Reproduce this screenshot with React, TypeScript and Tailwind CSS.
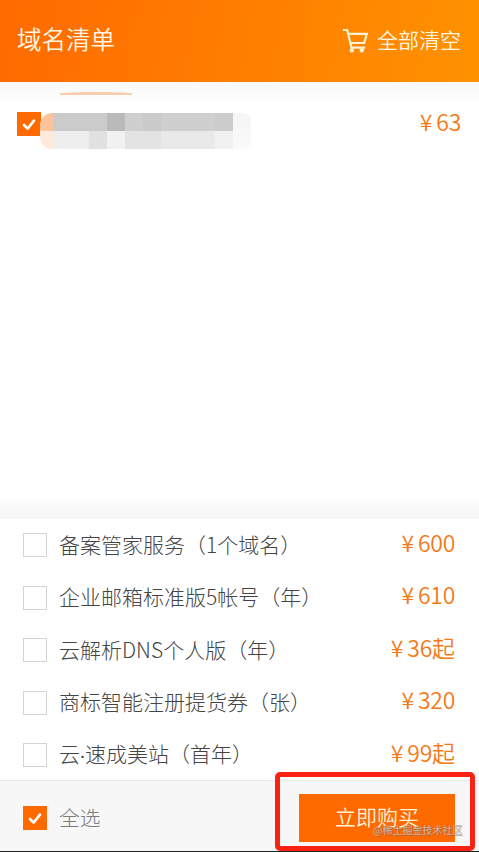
import clsx from "clsx";

const services = [
  { name: "备案管家服务（1个域名）", price: "600" },
  { name: "企业邮箱标准版5帐号（年）", price: "610" },
  { name: "云解析DNS个人版（年）", price: "36", from: true },
  { name: "商标智能注册提货券（张）", price: "320" },
  { name: "云·速成美站（首年）", price: "99", from: true },
];

function Checkbox({ checked = false }: { checked?: boolean }) {
  return (
    <span
      className={clsx(
        "flex h-6 w-6 shrink-0 items-center justify-center",
        checked ? "bg-[#ff6a00]" : "border border-[#d4d4d4] bg-white"
      )}
    >
      {checked && (
        <svg width="24" height="24" viewBox="0 0 24 24" fill="none">
          <path
            d="M7 13l3.6 3.6L17 8.6"
            stroke="#fff"
            strokeWidth="2.6"
            strokeLinecap="round"
            strokeLinejoin="round"
          />
        </svg>
      )}
    </span>
  );
}

function Price({ value, from }: { value: string; from?: boolean }) {
  return (
    <span className="flex items-center pb-[6px] text-[23px] leading-none font-[350] text-[#f47a16]">
      <span className="mr-[4px]">¥</span>
      <span className="tracking-[-0.3px]">{value}</span>
      {from && <span>起</span>}
    </span>
  );
}

function CartIcon() {
  return (
    <svg
      width="26"
      height="26"
      viewBox="0 0 26 26"
      fill="none"
      stroke="#fff3d6"
      strokeWidth="2.2"
    >
      <path d="M0 2h4.2l4.3 17.6h13.7" />
      <path d="M5.2 5.8h18.6l-2.6 9.2H7.6" />
      <circle cx="8.8" cy="22.4" r="2.2" fill="#fff3d6" stroke="none" />
      <circle cx="18.8" cy="22.4" r="2.2" fill="#fff3d6" stroke="none" />
    </svg>
  );
}

// blurred-out domain name
function MaskedDomain() {
  return (
    <div className="flex h-9">
      <div className="w-[13px] rounded-l-xl bg-linear-to-b from-[#ffc49b] from-50% to-[#ffe9dc] to-50%" />
      <div>
        <div className="flex h-[18px]">
          <i className="w-[54px] bg-[#cbcbcb]" />
          <i className="w-[18px] bg-[#bababa]" />
          <i className="w-[18px] bg-[#cfcfcf]" />
          <i className="w-[18px] bg-[#cacaca]" />
          <i className="w-[54px] bg-[#cfcfcf]" />
          <i className="w-[18px] bg-[#cccccc]" />
        </div>
        <div className="flex h-[18px]">
          <i className="w-9 bg-[#eeeeee]" />
          <i className="w-[18px] bg-[#e1e1e1]" />
          <i className="w-[18px] bg-[#f1f1f1]" />
          <i className="w-9 bg-[#e3e3e3]" />
          <i className="w-[54px] bg-[#e9e9e9]" />
          <i className="w-[18px] bg-[#f1f1f1]" />
        </div>
      </div>
      <div className="w-[18px] rounded-r-lg bg-linear-to-b from-[#f5f5f5] to-[#fafafa]" />
    </div>
  );
}

export default function App() {
  return (
    <div className="relative flex h-[852px] w-[479px] flex-col overflow-hidden bg-white font-['Noto_Sans_CJK_SC',sans-serif] font-light">
      <header className="flex h-[82px] shrink-0 items-center justify-between bg-linear-[100deg] from-[#ff6a00] to-[#ff9200] pr-[18px] pl-[17px] text-[#fff7e6]">
        <h1 className="-mt-[4px] text-[24.5px] leading-none font-[350]">域名清单</h1>
        <div className="flex items-center gap-2">
          <CartIcon />
          <span className="-mt-[3px] text-[21px] leading-none font-[350]">全部清空</span>
        </div>
      </header>

      <main className="relative flex-1 bg-linear-to-b from-[#f8f8f8] to-white to-[24px]">
        <div className="absolute top-[10px] left-[60px] h-[3px] w-[72px] rounded-t-[50%] bg-[#f9cdb0]" />
        <div className="flex items-start justify-between pt-[30px] pr-[18px] pl-[17px]">
          <div className="flex items-start">
            <Checkbox checked />
            <div className="mt-px -ml-px">
              <MaskedDomain />
            </div>
          </div>
          <div className="-mt-[2px]">
            <Price value="63" />
          </div>
        </div>
      </main>

      <div className="h-6 bg-linear-to-b from-white to-[#f5f5f5]" />
      <ul className="flex h-[261px] shrink-0 flex-col gap-[2.5px] rounded-t bg-white pt-px">
        {services.map((s) => (
          <li
            key={s.name}
            className="flex h-[50px] shrink-0 items-center pr-6 pl-[23px]"
          >
            <Checkbox />
            <span className="ml-3 flex-1 pb-[2px] text-[21px] leading-none text-[#444]">
              {s.name.split("·").map((part, i) => (
                <span key={part}>
                  {i > 0 && (
                    <span className="-mx-px font-['Liberation_Sans']">·</span>
                  )}
                  {part}
                </span>
              ))}
            </span>
            <Price value={s.price} from={s.from} />
          </li>
        ))}
      </ul>

      <footer className="flex h-[72px] shrink-0 items-center border-t border-b border-t-[#e8e8e8] border-b-[#222] bg-[#f7f7f7] pt-1 pr-6 pl-[23px]">
        <Checkbox checked />
        <span className="ml-3 flex-1 pb-[2px] text-[20.8px] leading-none text-[#7c7c7c]">
          全选
        </span>
        <button className="h-12 w-[156px] bg-[#ff6a00] pb-1 text-[21px] leading-none font-[350] text-[#fff3dc]">
          立即购买
        </button>
      </footer>

      <div className="absolute top-[772px] left-[275px] h-[79px] w-[200px] rounded-[5px] border-[5px] border-[#fb2113]" />
      <span className="absolute top-[823px] left-[373px] text-[10px] leading-[14px] font-normal whitespace-nowrap text-[#c9b3a3] [text-shadow:1px_1px_1px_#6669]">
        @稀土掘金技术社区
      </span>
    </div>
  );
}
